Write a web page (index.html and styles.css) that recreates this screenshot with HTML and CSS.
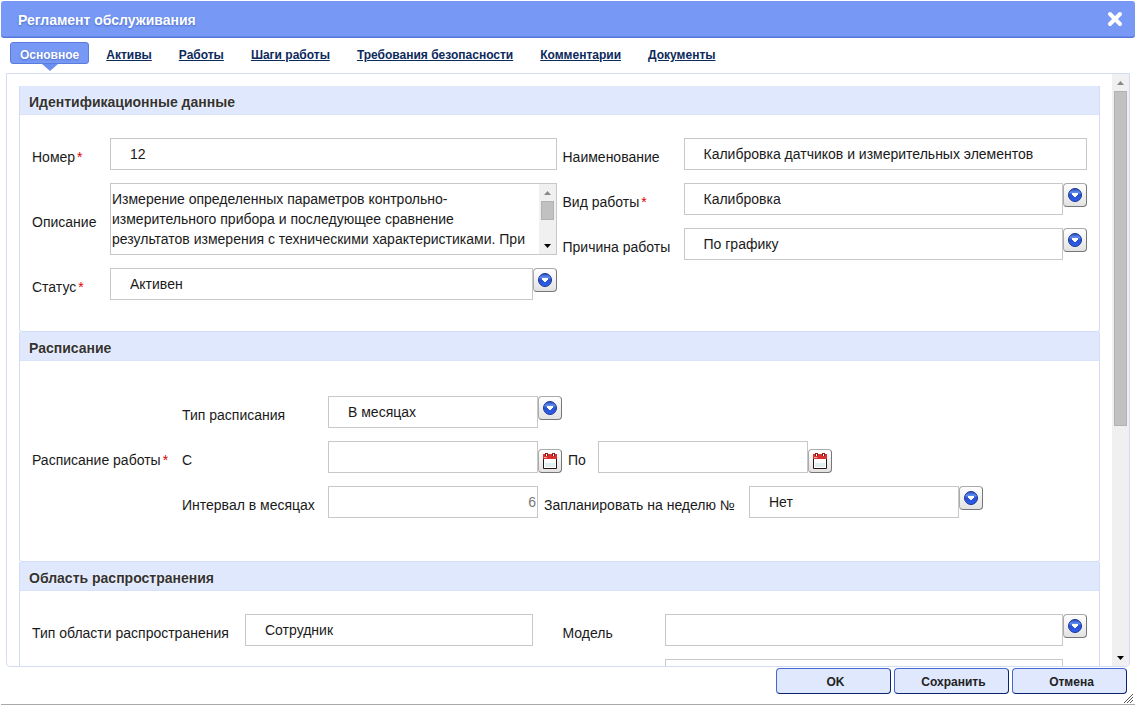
FILE: index.html
```html
<!DOCTYPE html>
<html lang="ru">
<head>
<meta charset="utf-8">
<title>Регламент обслуживания</title>
<link rel="stylesheet" href="styles.css">
</head>
<body>
<svg class="defs" aria-hidden="true">
  <defs>
    <linearGradient id="blue" x1="0" y1="0" x2="0" y2="1">
      <stop offset="0" stop-color="#2647b8"/><stop offset=".3" stop-color="#5f8df0"/><stop offset=".5" stop-color="#2a50cc"/><stop offset="1" stop-color="#2c62f2"/>
    </linearGradient>
    <symbol id="drop" viewBox="0 0 14 14">
      <circle cx="7" cy="7" r="6.5" fill="url(#blue)" stroke="#1d3596"/>
      <path d="M4 5h6v2H9v1H8v1H6V8H5V7H4z" fill="#fff"/>
    </symbol>
    <symbol id="calendar" viewBox="0 0 14 16">
      <path d="M.5 4.500v11h13v-11z" fill="#fff" stroke="#2c1414"/>
      <path d="M2 10h10v4H2z" fill="#e3eeee"/>
      <path d="M0 1h14v5H0z" fill="#d93030"/>
      <path d="M1 4h3v1H1z" fill="#f6a5a5"/>
      <path d="M2 0h3v3H2zM9 0h3v3H9z" fill="#8a1c1c"/>
      <path d="M3 1h1v2H3zM10 1h1v2h-1z" fill="#fff"/>
    </symbol>
    <symbol id="up" viewBox="0 0 7 4"><path d="M0 4h7L3.500 0z"/></symbol>
    <symbol id="down" viewBox="0 0 7 4"><path d="M0 0h7L3.500 4z"/></symbol>
  </defs>
</svg>
<main class="dialog">
  <header class="titlebar">
    <h1 class="title">Регламент обслуживания</h1>
    <button class="close" aria-label="Закрыть">
      <svg width="16" height="16" viewBox="0 0 16 16"><path d="M3 3l10 10M13 3L3 13" stroke="#fff" stroke-width="4" stroke-linecap="round"/></svg>
    </button>
  </header>
  <nav class="tabs">
    <a class="tab active" href="#">Основное</a>
    <a class="tab" href="#">Активы</a>
    <a class="tab" href="#">Работы</a>
    <a class="tab" href="#">Шаги работы</a>
    <a class="tab" href="#">Требования безопасности</a>
    <a class="tab" href="#">Комментарии</a>
    <a class="tab" href="#">Документы</a>
  </nav>
  <div class="panel">
    <div class="content">
      <section class="section">
        <h2 class="heading">Идентификационные данные</h2>
        <div class="body columns">
          <div class="column">
            <div class="row">
              <label class="label label-short" for="number">Номер<span class="req">*</span></label>
              <input class="input" id="number" value="12">
            </div>
            <div class="row">
              <label class="label label-short" for="description">Описание</label>
              <div class="memo">
                <textarea class="memo-text" id="description" rows="3">Измерение определенных параметров контрольно-измерительного прибора и последующее сравнение результатов измерения с техническими характеристиками. При</textarea>
                <div class="scroll">
                  <svg class="arrow arrow-off"><use href="#up"/></svg>
                  <div class="track"><div class="thumb thumb-memo"></div></div>
                  <svg class="arrow"><use href="#down"/></svg>
                </div>
              </div>
            </div>
            <div class="row">
              <label class="label label-short" for="status">Статус<span class="req">*</span></label>
              <input class="input" id="status" value="Активен">
              <button class="pick" aria-label="Выбрать статус"><svg class="icon"><use href="#drop"/></svg></button>
            </div>
          </div>
          <div class="column">
            <div class="row">
              <label class="label label-name" for="name">Наименование</label>
              <input class="input" id="name" value="Калибровка датчиков и измерительных элементов">
            </div>
            <div class="row">
              <label class="label label-name" for="kind">Вид работы<span class="req">*</span></label>
              <input class="input" id="kind" value="Калибровка">
              <button class="pick" aria-label="Выбрать вид работы"><svg class="icon"><use href="#drop"/></svg></button>
            </div>
            <div class="row">
              <label class="label label-name" for="reason">Причина работы</label>
              <input class="input" id="reason" value="По графику">
              <button class="pick" aria-label="Выбрать причину работы"><svg class="icon"><use href="#drop"/></svg></button>
            </div>
          </div>
        </div>
      </section>
      <section class="section">
        <h2 class="heading">Расписание</h2>
        <div class="body schedule">
          <span class="label label-group">Расписание работы<span class="req">*</span></span>
          <div class="column">
            <div class="row">
              <label class="label label-sched" for="type">Тип расписания</label>
              <input class="input fixed" id="type" value="В месяцах">
              <button class="pick" aria-label="Выбрать тип расписания"><svg class="icon"><use href="#drop"/></svg></button>
            </div>
            <div class="row">
              <label class="label label-sched" for="from">С</label>
              <input class="input fixed" id="from">
              <button class="pick date" aria-label="Дата начала"><svg class="icon icon-cal"><use href="#calendar"/></svg></button>
              <label class="label label-to" for="to">По</label>
              <input class="input fixed" id="to">
              <button class="pick date" aria-label="Дата окончания"><svg class="icon icon-cal"><use href="#calendar"/></svg></button>
            </div>
            <div class="row">
              <label class="label label-sched" for="interval">Интервал в месяцах</label>
              <input class="input fixed numeric" id="interval" value="6">
              <label class="label label-week" for="week">Запланировать на неделю №</label>
              <input class="input fixed" id="week" value="Нет">
              <button class="pick" aria-label="Выбрать неделю"><svg class="icon"><use href="#drop"/></svg></button>
            </div>
          </div>
        </div>
      </section>
      <section class="section">
        <h2 class="heading">Область распространения</h2>
        <div class="body columns">
          <div class="column">
            <div class="row row-plain">
              <label class="label label-scope" for="scope">Тип области распространения</label>
              <input class="input" id="scope" value="Сотрудник">
            </div>
          </div>
          <div class="column">
            <div class="row">
              <label class="label label-model" for="model">Модель</label>
              <input class="input" id="model">
              <button class="pick" aria-label="Выбрать модель"><svg class="icon"><use href="#drop"/></svg></button>
            </div>
            <div class="row row-plain">
              <span class="label label-model"></span>
              <input class="input" aria-label="Дополнительно">
            </div>
          </div>
        </div>
      </section>
    </div>
    <div class="scroll">
      <svg class="arrow arrow-off"><use href="#up"/></svg>
      <div class="track"><div class="thumb thumb-page"></div></div>
      <svg class="arrow"><use href="#down"/></svg>
    </div>
  </div>
  <footer class="footer">
    <button class="button">OK</button>
    <button class="button">Сохранить</button>
    <button class="button">Отмена</button>
  </footer>
  <svg class="grip" width="9" height="9" viewBox="0 0 9 9"><path d="M0 9L9 0M3 9l6-6M6 9l3-3" stroke="#555"/></svg>
</main>
</body>
</html>
```
FILE: styles.css
```css
* {
  box-sizing: border-box;
}

body {
  margin: 0;
  background: #fff;
  color: #1a1a1a;
  font: 14px/20px "Liberation Sans", Arial, sans-serif;
}

button,
input,
textarea {
  margin: 0;
  font: inherit;
  color: inherit;
}

.defs {
  position: absolute;
  width: 0;
  height: 0;
}

.dialog {
  position: relative;
  display: flex;
  flex-direction: column;
  height: calc(100vh - 2px);
  margin: 1px 1px 0;
  border-bottom: 1px solid #aaa;
}

.titlebar {
  display: flex;
  align-items: center;
  justify-content: space-between;
  height: 37px;
  padding: 0 12px 0 17px;
  border-bottom: 1px solid #5377da;
  border-radius: 3px;
  background: #7799f5;
  box-shadow: inset 0 -1px #6688e8;
}

.title {
  margin: 0;
  padding-top: 2px;
  color: #fff;
  font-size: 14px;
  text-shadow: 0 1px 2px #4a6ac8;
}

.close {
  display: flex;
  padding: 0;
  border: 0;
  background: none;
}

.tabs {
  display: flex;
  gap: 27px;
  padding: 4px 9px 9px;
}

.tab {
  height: 22px;
  color: #0c2a5c;
  font-size: 12px;
  font-weight: bold;
  line-height: 26px;
}

.tab.active {
  position: relative;
  margin-right: -10px;
  padding: 0 9px;
  border: 1px solid #5a7ddd;
  border-radius: 3px;
  background: #7799f5;
  color: #fff;
  line-height: 24px;
  text-decoration: none;
  text-shadow: 0 1px 2px #4a6ac8;
}

.tab.active::after {
  content: "";
  position: absolute;
  top: 21px;
  left: 50%;
  margin-left: -8px;
  border: 8px solid transparent;
  border-top: 7px solid #6c8eee;
  border-bottom: 0;
}

.panel {
  display: flex;
  flex: 1;
  min-height: 0;
  margin: 0 5px;
  overflow: hidden;
  border: 1px solid #d3dcf2;
  border-radius: 0 0 4px 4px;
}

.content {
  flex: 1;
  min-width: 0;
  padding: 12px 12px 0;
  overflow: hidden;
}

.section {
  border: 1px solid #d3dcf2;
  border-top: 0;
  border-radius: 0 0 3px 3px;
}

.heading {
  margin: 0;
  padding: 7px 9px 3px;
  border-bottom: 1px solid #d9e2f8;
  background: #e0e8fd;
  color: #333;
  font-size: 14px;
  line-height: 18px;
  text-shadow: 0 0 2px #fff;
}

.body {
  display: flex;
  padding: 23px 12px 31px;
}

.columns {
  gap: 6px;
}

.column {
  display: flex;
  flex: 1 1 0;
  flex-direction: column;
  gap: 13px;
  min-width: 0;
}

.row {
  display: flex;
  align-items: flex-start;
}

.row-plain {
  padding-right: 24px;
}

.schedule {
  align-items: center;
  padding: 35px 12px 43px;
}

.label {
  flex: none;
  align-self: center;
  padding-top: 6px;
  white-space: nowrap;
}

.label-short {
  width: 78px;
}

.label-name {
  width: 121px;
}

.label-group {
  width: 150px;
}

.label-sched {
  width: 146px;
}

.label-to {
  width: 36px;
  padding-left: 6px;
}

.label-week {
  width: 211px;
  padding-left: 6px;
}

.label-scope {
  width: 213px;
}

.label-model {
  width: 102px;
}

.req {
  padding-left: 2px;
  color: #d00;
}

.input {
  flex: 1;
  min-width: 0;
  height: 32px;
  padding: 0 19px;
  border: 1px solid #c8c8c8;
  border-radius: 0;
  background: #fff;
}

.input.fixed {
  flex: none;
  width: 210px;
}

.input.numeric {
  padding: 0 1px;
  color: #777;
  text-align: right;
}

.memo {
  display: flex;
  flex: 1;
  min-width: 0;
  height: 72px;
  border: 1px solid #c8c8c8;
}

.memo-text {
  flex: 1;
  min-width: 0;
  padding: 5px 8px 5px 1px;
  overflow: hidden;
  border: 0;
  resize: none;
}

.pick {
  display: flex;
  flex: none;
  align-items: center;
  justify-content: center;
  width: 24px;
  height: 24px;
  padding: 0;
  border: 1px solid #aaa;
  border-right-color: #777;
  border-bottom-color: #777;
  border-radius: 4px;
  background: linear-gradient(#fff, #e2e2e2);
}

.pick.date {
  align-self: flex-end;
}

.icon {
  width: 14px;
  height: 14px;
}

.icon-cal {
  height: 16px;
}

.scroll {
  display: flex;
  flex: none;
  flex-direction: column;
  align-items: center;
  width: 17px;
  background: #f0f0f0;
}

.arrow {
  width: 7px;
  height: 4px;
  margin: 7px 0 6px;
  fill: #000;
}

.arrow-off {
  fill: #888;
}

.track {
  flex: 1;
  width: 13px;
}

.thumb {
  border: 1px solid #b2b2b2;
  background: #c1c1c1;
}

.thumb-memo {
  height: 19px;
}

.thumb-page {
  height: 60%;
}

.footer {
  display: flex;
  justify-content: flex-end;
  gap: 3px;
  padding: 1px 8px 10px;
}

.button {
  width: 115px;
  height: 26px;
  padding: 1px 0 0 4px;
  border: 1px solid #4468cf;
  border-right-color: #0a2472;
  border-bottom-color: #0a2472;
  border-radius: 4px;
  background: #e0e8fd;
  color: #222;
  font-size: 12px;
  font-weight: bold;
}

.grip {
  position: absolute;
  right: 2px;
  bottom: 1px;
}
```
